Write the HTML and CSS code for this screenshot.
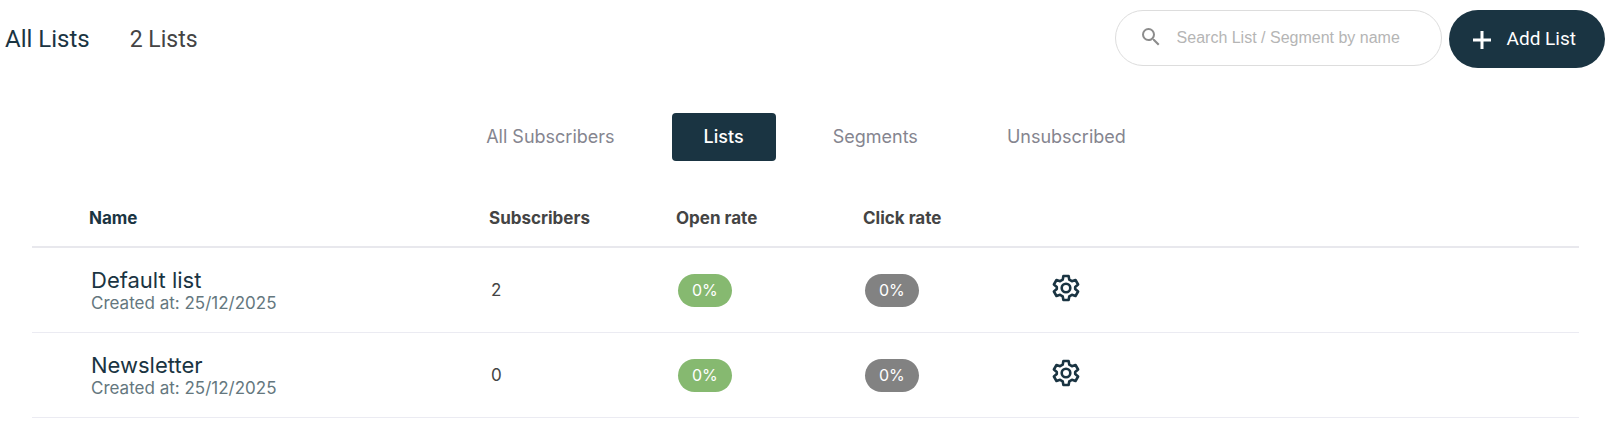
FILE: index.html
```
<!DOCTYPE html>
<html lang="en">
<head>
    <meta charset="UTF-8">
    <meta name="viewport" content="width=device-width, initial-scale=1.0">
    <title>All Lists</title>
    <link rel="stylesheet" href="styles.css">
</head>
<body>

    <svg class="sprite" aria-hidden="true">
        <symbol id="gear" viewBox="0 0 28 28">
            <path d="M11.4 2h5.2l.7 3.7 2.6 1.5 3.6-1.2 2.6 4.5-2.9 2.5v2l2.9 2.5-2.6 4.5-3.6-1.2-2.6 1.5-.7 3.7h-5.2l-.7-3.7-2.6-1.5L4.500 22l-2.600-4.500 2.900-2.500v-2L1.900 10.500 4.500 6l3.600 1.200 2.600-1.500z" fill="none" stroke="currentColor" stroke-width="2.600" stroke-linejoin="round"/>
            <circle cx="14" cy="14" r="4.300" fill="none" stroke="currentColor" stroke-width="2.600"/>
        </symbol>
    </svg>

    <header class="topbar">
        <h1>All Lists</h1>
        <span class="count">2 Lists</span>

        <div class="actions">
            <label class="search">
                <svg width="18" height="20" viewBox="3 3 18 20" aria-hidden="true">
                    <path fill="currentColor" d="M15.500 14h-.79l-.28-.27A6.470 6.470 0 0 0 16 9.500 6.500 6.500 0 1 0 9.500 16c1.610 0 3.090-.59 4.230-1.570l.27.28v.79l5 4.990L20.490 19l-4.990-5zm-6 0C7.010 14 5 11.990 5 9.500S7.010 5 9.500 5 14 7.010 14 9.500 11.990 14 9.500 14z"/>
                </svg>
                <input type="text" placeholder="Search List / Segment by name" aria-label="Search List / Segment by name">
            </label>
            <button class="add-btn" type="button">
                <svg width="18" height="22" viewBox="0 0 18 22" aria-hidden="true">
                    <path d="M9 4v18M0 13h18" stroke="currentColor" stroke-width="3"/>
                </svg>
                Add List
            </button>
        </div>
    </header>

    <nav class="tabs">
        <a href="#subscribers">All Subscribers</a>
        <a href="#lists" class="active">Lists</a>
        <a href="#segments">Segments</a>
        <a href="#unsubscribed">Unsubscribed</a>
    </nav>

    <main class="lists">
        <table>
            <thead>
                <tr>
                    <th class="col-name">Name</th>
                    <th class="col-rate">Subscribers</th>
                    <th class="col-rate">Open rate</th>
                    <th class="col-rate">Click rate</th>
                    <td></td>
                </tr>
            </thead>
            <tbody>
                <tr>
                    <td class="name">
                        <a href="#default-list">Default list</a>
                        <small>Created at: 25/12/2025</small>
                    </td>
                    <td>2</td>
                    <td><span class="badge open">0%</span></td>
                    <td><span class="badge">0%</span></td>
                    <td><button class="gear" type="button" aria-label="Default list settings"><svg><use href="#gear"/></svg></button></td>
                </tr>
                <tr>
                    <td class="name">
                        <a href="#newsletter">Newsletter</a>
                        <small>Created at: 25/12/2025</small>
                    </td>
                    <td>0</td>
                    <td><span class="badge open">0%</span></td>
                    <td><span class="badge">0%</span></td>
                    <td><button class="gear" type="button" aria-label="Newsletter settings"><svg><use href="#gear"/></svg></button></td>
                </tr>
            </tbody>
        </table>
    </main>

</body>
</html>
```

FILE: styles.css
```
* {
    box-sizing: border-box;
}
body {
    font-family: Inter, sans-serif;
    margin: 0;
    background: #fff;
    color: #444;
}
a {
    text-decoration: none;
}
button {
    border: none;
    cursor: pointer;
}
.sprite {
    display: none;
}
.topbar {
    display: flex;
    align-items: center;
    padding: 10px 7px 0 5px;
    font-family: Roboto, sans-serif;
}
h1 {
    margin: 0;
    font-size: 24px;
    font-weight: 400;
    color: #1a3442;
}
.count {
    margin-left: 40px;
    font-size: 23px;
}
.actions {
    display: flex;
    align-items: flex-start;
    gap: 7px;
    margin-left: auto;
}
.search {
    display: flex;
    align-items: center;
    gap: 17px;
    width: 327px;
    height: 56px;
    padding: 0 26px;
    border: 1px solid #ddd;
    border-radius: 28px;
    color: #8c8c8c;
}
.search svg {
    flex: none;
}
.search input {
    flex: 1;
    min-width: 0;
    padding: 0;
    border: none;
    outline: none;
    font: 16px "Liberation Sans", Arial, sans-serif;
    color: #444;
}
.search input::placeholder {
    color: #b5b5b5;
}
.add-btn {
    display: flex;
    align-items: center;
    gap: 16px;
    height: 58px;
    padding: 0 29px 2px 24px;
    border-radius: 29px;
    background: #1a3442;
    color: #fff;
    font: 19px Roboto, sans-serif;
}
.tabs {
    display: flex;
    justify-content: center;
    gap: 25px;
    margin-top: 45px;
}
.tabs a {
    padding: 0 32px;
    border-radius: 4px;
    font-size: 18px;
    line-height: 48px;
    color: #85858f;
}
.tabs .active {
    background: #1a3442;
    color: #fff;
    font-weight: 500;
}
.lists {
    padding: 26px 33px 0 32px;
}
table {
    width: 100%;
    table-layout: fixed;
    border-collapse: separate;
    border-spacing: 0;
}
th {
    height: 61px;
    padding: 2px 0 0;
    text-align: left;
    font-size: 17px;
    font-weight: 700;
}
thead th,
thead td {
    border-bottom: 2px solid #e8e8ed;
}
.col-name {
    width: 457px;
    padding-left: 57px;
    color: #1a3442;
}
.col-rate {
    width: 187px;
}
tbody td {
    height: 85px;
    padding: 0 2px;
    border-bottom: 1px solid #ebebf2;
    font-size: 17px;
}
tbody .name {
    padding-top: 2px;
    padding-left: 59px;
}
.name a {
    display: block;
    font-size: 22px;
    line-height: 24px;
    color: #1a3442;
}
.name small {
    display: block;
    font-size: 17px;
    line-height: 22px;
    color: #64777e;
}
.badge {
    display: inline-block;
    padding: 0 14px;
    border-radius: 17px;
    background: #828282;
    color: #fff;
    font-size: 16px;
    line-height: 33px;
}
.badge.open {
    background: #86b970;
}
.gear {
    display: block;
    margin-bottom: 4px;
    padding: 0;
    background: none;
    color: #1a3442;
}
.gear svg {
    display: block;
    width: 28px;
    height: 28px;
}
```
